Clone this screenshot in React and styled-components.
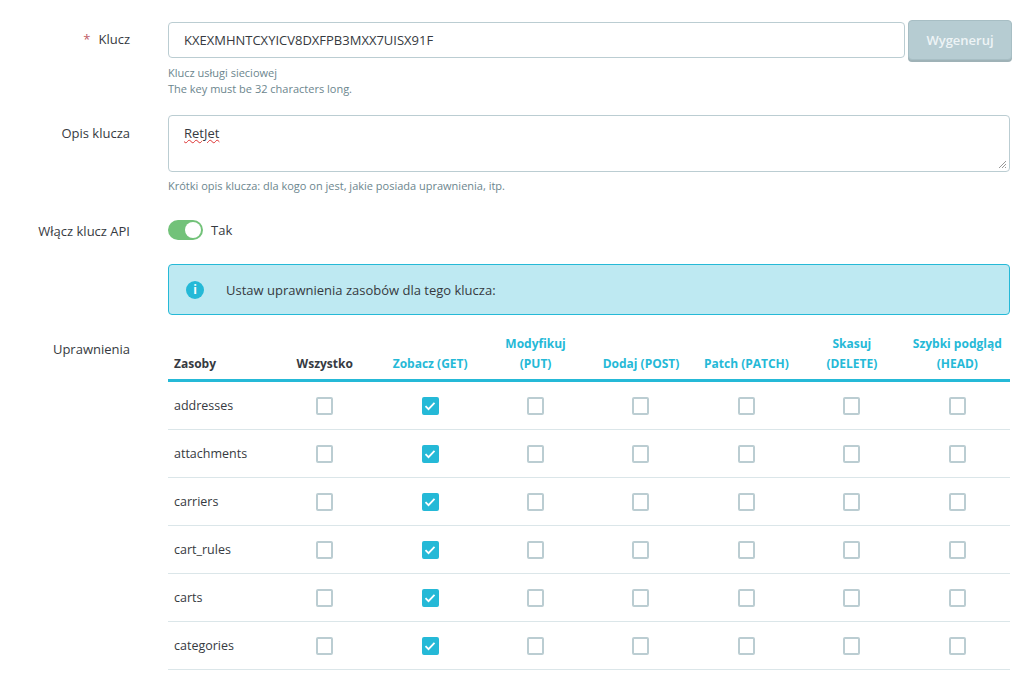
import React from "react";
import styled, { createGlobalStyle } from "styled-components";

const G = createGlobalStyle`
  body { margin:0; font-family:"Open Sans", sans-serif; color:#363a41; background:#fff; }
`;
const Form = styled.div`display:flex;flex-direction:column;padding-top:20px;`;
const Row = styled.div`display:grid;grid-template-columns:130px 1fr;column-gap:38px;padding-right:14px;`;
const Label = styled.div`text-align:right;font-size:13px;padding-top:${p=>p.pt||0}px;color:#363a41;`;
const Star = styled.span`color:#c05c67;margin-right:8px;`;
const InputRow = styled.div`display:flex;gap:3px;align-items:flex-start;`;
const Input = styled.div`flex:1;height:36px;margin-top:2px;box-sizing:border-box;border:1px solid #bbcdd2;border-radius:4px;padding:0 15px;display:flex;align-items:center;font-size:13px;`;
const Btn = styled.div`width:104px;height:40px;margin-right:-2px;box-sizing:border-box;background:#b6ccd2;border:1px solid #a7bec4;border-radius:4px;color:#eef4f6;font-size:13px;font-weight:600;display:flex;align-items:center;justify-content:center;box-shadow:0 2px 0 #9fb2b7;`;
const Help = styled.div`font-size:11px;color:#6c868e;line-height:16px;margin-top:${p=>p.mt||0}px;`;
const Area = styled.div`height:57px;box-sizing:border-box;border:1px solid #bbcdd2;border-radius:4px;padding:8px 15px;font-size:13px;position:relative;`;
const Grip = styled.svg`position:absolute;right:2px;bottom:2px;`;
const Squiggle = styled.span`text-decoration:underline wavy #d33;text-decoration-thickness:1px;`;
const Toggle = styled.div`display:flex;align-items:center;gap:8px;font-size:13px;`;
const Track = styled.div`width:35px;height:20px;border-radius:10px;background:#72c279;position:relative;`;
const Knob = styled.div`position:absolute;right:2px;top:2px;width:16px;height:16px;border-radius:50%;background:#fff;`;
const Alert = styled.div`height:51px;box-sizing:border-box;background:#bee9f2;border:1px solid #25b9d7;border-radius:4px;display:flex;align-items:center;padding-left:17px;gap:22px;font-size:13px;`;
const Info = styled.div`width:18px;height:18px;border-radius:50%;background:#25b9d7;color:#fff;font-size:12px;font-weight:700;display:flex;align-items:center;justify-content:center;`;
const Table = styled.div`display:grid;grid-template-columns:104px repeat(7,1fr);`;
const Th = styled.div`height:46px;border-bottom:3px solid #25b9d7;box-sizing:border-box;display:flex;align-items:flex-end;justify-content:${p=>p.left?"flex-start":"center"};text-align:center;padding:0 ${p=>p.left?6:0}px 5px;font-size:12px;font-weight:700;line-height:20px;color:${p=>p.blue?"#25b9d7":"#363a41"};white-space:nowrap;`;
const Td = styled.div`height:48px;box-sizing:border-box;border-bottom:1px solid #dbe6e9;display:flex;align-items:center;justify-content:${p=>p.left?"flex-start":"center"};padding-left:${p=>p.left?6:0}px;font-size:12.5px;`;
const Box = styled.div`width:17px;height:18px;box-sizing:border-box;border:2px solid;border-radius:2px;background:${p=>p.on?"#25b9d7":"#fff"};border-color:${p=>p.on?"#25b9d7":"#bbcdd2"};display:flex;align-items:center;justify-content:center;`;

const heads = [["Wszystko",false],["Zobacz (GET)",true],["Modyfikuj<br>(PUT)",true],["Dodaj (POST)",true],["Patch (PATCH)",true],["Skasuj<br>(DELETE)",true],["Szybki podgląd<br>(HEAD)",true]];
const res = ["addresses","attachments","carriers","cart_rules","carts","categories"];

export default function App(){
  return <><G/><Form>
    <Row><Label pt={10}><Star>*</Star>Klucz</Label><div>
      <InputRow><Input>KXEXMHNTCXYICV8DXFPB3MXX7UISX91F</Input><Btn>Wygeneruj</Btn></InputRow>
      <Help mt={5}>Klucz usługi sieciowej<br/>The key must be 32 characters long.</Help>
    </div></Row>
    <Row style={{marginTop:18}}><Label pt={9}>Opis klucza</Label><div>
      <Area><Squiggle>RetJet</Squiggle>
        <Grip width="9" height="9" viewBox="0 0 9 9"><path d="M8 1L1 8M8 4L4 8M8 7L7 8" stroke="#999" strokeWidth="1"/></Grip>
      </Area>
      <Help mt={6}>Krótki opis klucza: dla kogo on jest, jakie posiada uprawnienia, itp.</Help>
    </div></Row>
    <Row style={{marginTop:26}}><Label pt={2}>Włącz klucz API</Label>
      <Toggle><Track><Knob/></Track>Tak</Toggle></Row>
    <Row style={{marginTop:24}}><div/><Alert><Info>i</Info>Ustaw uprawnienia zasobów dla tego klucza:</Alert></Row>
    <Row style={{marginTop:21}}><Label pt={4}>Uprawnienia</Label>
      <Table>
        <Th left>Zasoby</Th>
        {heads.map(([h,b])=><Th key={h} blue={b} dangerouslySetInnerHTML={{__html:h}}/>)}
        {res.map(r=><React.Fragment key={r}>
          <Td left>{r}</Td>
          {heads.map((_,i)=><Td key={i}><Box on={i===1}>{i===1&&<svg width="12" height="10" viewBox="0 0 12 10"><path d="M1.5 5.2l3 3L10.5 1.8" stroke="#fff" strokeWidth="1.8" fill="none"/></svg>}</Box></Td>)}
        </React.Fragment>)}
      </Table>
    </Row>
  </Form></>;
}
